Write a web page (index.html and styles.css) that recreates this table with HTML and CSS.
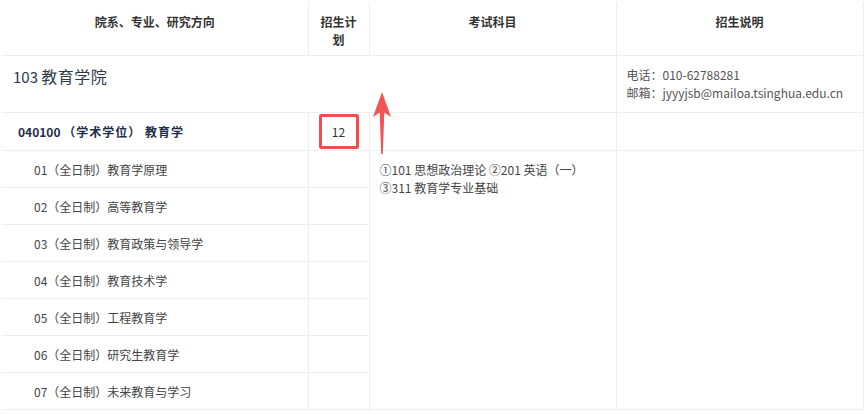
FILE: index.html
```html
<!DOCTYPE html>
<html lang="zh-CN">
<head>
<meta charset="utf-8">
<title>招生目录</title>
<link rel="stylesheet" href="styles.css">
</head>
<body>
<div class="wrap">
  <table class="plan">
    <colgroup>
      <col class="c1"><col class="c2"><col class="c3"><col class="c4">
    </colgroup>
    <thead>
      <tr class="head">
        <th>院系、专业、研究方向</th>
        <th class="narrow">招生计划</th>
        <th>考试科目</th>
        <th>招生说明</th>
      </tr>
    </thead>
    <tbody>
      <tr class="dept">
        <td colspan="3" class="dept-name"><span class="code">103</span> <span class="dept-cn">教育学院</span></td>
        <td class="contact">电话：010-62788281<br>邮箱：jyyyjsb@mailoa.tsinghua.edu.cn</td>
      </tr>
      <tr class="major">
        <td class="major-name">040100 <span class="major-cn">（学术学位） 教育学</span></td>
        <td class="num"><span class="mark">12</span></td>
        <td></td>
        <td></td>
      </tr>
      <tr class="dir">
        <td class="dir-name">01（全日制）教育学原理</td>
        <td></td>
        <td rowspan="7" class="exam">①101 思想政治理论 ②201 英语（一）<br>③311 教育学专业基础</td>
        <td rowspan="7"></td>
      </tr>
      <tr class="dir"><td class="dir-name">02（全日制）高等教育学</td><td></td></tr>
      <tr class="dir"><td class="dir-name">03（全日制）教育政策与领导学</td><td></td></tr>
      <tr class="dir"><td class="dir-name">04（全日制）教育技术学</td><td></td></tr>
      <tr class="dir"><td class="dir-name">05（全日制）工程教育学</td><td></td></tr>
      <tr class="dir"><td class="dir-name">06（全日制）研究生教育学</td><td></td></tr>
      <tr class="dir"><td class="dir-name">07（全日制）未来教育与学习</td><td></td></tr>
    </tbody>
  </table>
  <svg class="arrow" width="24" height="64" viewBox="0 0 24 64" aria-hidden="true">
    <path d="M12 0 L21 25 L14.3 20.5 L12.8 62 L11.2 62 L9.7 20.5 L3 25 Z" fill="#f25454"/>
  </svg>
</div>
</body>
</html>
```
FILE: styles.css
```css
html, body {
  margin: 0;
  padding: 0;
  background: #ffffff;
}

body {
  font-family: "Noto Sans CJK SC", "Noto Sans", sans-serif;
  font-size: 12px;
  color: #444;
}

.wrap {
  position: relative;
  padding: 2px 0 0 2px;
}

.plan {
  border-collapse: collapse;
  table-layout: fixed;
  width: 861px;
}

.c1 { width: 306px; }
.c2 { width: 61px; }
.c3 { width: 247px; }
.c4 { width: 247px; }

.plan th,
.plan td {
  border: 1px solid #eeeeee;
  padding: 0;
}

.plan tr:first-child th { border-top: none; }
.plan th:first-child,
.plan td:first-child { border-left: none; }

.plan th {
  height: 42px;
  vertical-align: top;
  padding: 11px 0 0;
  font-weight: bold;
  color: #333;
  line-height: 18px;
  text-align: center;
}

.plan th.narrow {
  padding-left: 10px;
  padding-right: 10px;
}

.dept td {
  height: 56px;
}

.dept .dept-name {
  height: 48px;
  vertical-align: top;
  padding: 8px 0 0 11px;
  font-size: 15px;
  line-height: 24px;
  color: #2d3a4a;
}

.dept-cn {
  font-size: 16px;
  letter-spacing: 0.5px;
}

.dept .contact {
  vertical-align: middle;
  padding: 0 0 0 10px;
  line-height: 18px;
  color: #555;
}

.major td {
  height: 37px;
}

.major .major-name {
  vertical-align: middle;
  padding-left: 16px;
  font-weight: bold;
  color: #1e2e48;
}

.major-cn {
  letter-spacing: 1px;
}

.num {
  text-align: center;
  vertical-align: middle;
}

.mark {
  display: inline-block;
  box-sizing: border-box;
  width: 40px;
  height: 35px;
  line-height: 29px;
  border: 3px solid #f04f4f;
  border-radius: 2px;
  color: #333;
  vertical-align: middle;
}

.dir td {
  height: 36px;
}

.dir .dir-name {
  vertical-align: middle;
  padding-left: 32px;
  color: #444;
}

.dir .exam {
  vertical-align: top;
  padding: 10px 0 0 10px;
  line-height: 18px;
  color: #444;
}

.arrow {
  position: absolute;
  left: 370px;
  top: 92px;
}
```
